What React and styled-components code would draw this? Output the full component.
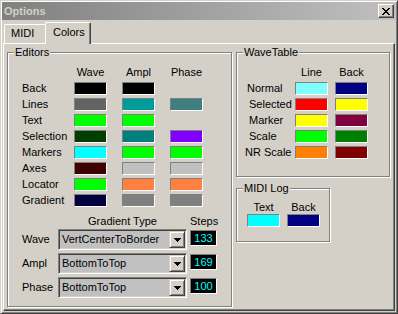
import React from "react";
import styled, { createGlobalStyle } from "styled-components";

const GlobalStyle = createGlobalStyle`
  html, body { margin: 0; padding: 0; background: #d4d0c8; }
  body { font-family: "Liberation Sans", Arial, sans-serif; font-size: 11px; color: #000; }
  * { box-sizing: border-box; }
`;

const Window = styled.div`
  width: 398px;
  height: 314px;
  background: #d4d0c8;
  border: 1px solid;
  border-color: #d4d0c8 #404040 #404040 #d4d0c8;
  box-shadow: inset 1px 1px 0 #fff, inset -1px -1px 0 #808080;
  padding: 1px;
  display: flex;
  flex-direction: column;
`;

const TitleBar = styled.div`
  height: 18px;
  background: linear-gradient(to right, #808080, #c0c0c0);
  display: flex;
  align-items: center;
  justify-content: space-between;
  padding: 0 2px 0 2px;
`;

const TitleText = styled.span`
  color: #d4d0c8;
  font-weight: bold;
  font-size: 11px;
  line-height: 13px;
`;

const CloseButton = styled.div`
  width: 16px;
  height: 14px;
  background: #d4d0c8;
  border: 1px solid;
  border-color: #fff #404040 #404040 #fff;
  box-shadow: inset -1px -1px 0 #808080;
  display: flex;
  align-items: center;
  justify-content: center;
  padding-right: 1px;
`;

const TabStrip = styled.div`
  height: 21px;
  margin-top: 2px;
  display: flex;
  align-items: flex-end;
`;

const Tab = styled.div`
  position: relative;
  z-index: ${(p) => (p.$active ? 1 : 0)};
  width: ${(p) => p.$w}px;
  height: ${(p) => (p.$active ? 22 : 19)}px;
  margin-left: ${(p) => p.$ml}px;
  margin-bottom: ${(p) => (p.$active ? -1 : 0)}px;
  background: #d4d0c8;
  border-top: 1px solid #fff;
  border-left: 1px solid #fff;
  border-right: 1px solid #404040;
  border-top-left-radius: 2px;
  border-top-right-radius: 2px;
  box-shadow: inset -1px 0 0 #808080;
  display: flex;
  align-items: center;
  padding-left: ${(p) => p.$pl}px;
  padding-bottom: ${(p) => (p.$active ? 3 : 2)}px;
  line-height: 13px;
`;

const Panel = styled.div`
  margin: 0 1px;
  height: 268px;
  border-top: 1px solid #fff;
  border-left: 1px solid #fff;
  border-right: 1px solid #404040;
  border-bottom: 1px solid #404040;
  box-shadow: inset -1px -1px 0 #808080;
  padding: 8px 0 0 3px;
  display: flex;
  gap: 4px;
  align-items: flex-start;
`;

const Column = styled.div`
  display: flex;
  flex-direction: column;
  gap: 11px;
`;

const GroupBox = styled.div`
  position: relative;
  width: ${(p) => p.$w}px;
  height: ${(p) => p.$h}px;
  border: 1px solid #808080;
  box-shadow: inset 1px 1px 0 #fff, 1px 1px 0 #fff;
  padding: ${(p) => p.$pad};
  display: flex;
  flex-direction: column;
`;

const Legend = styled.span`
  position: absolute;
  top: -7px;
  left: 6px;
  padding: 0 1px;
  background: #d4d0c8;
  line-height: 13px;
  white-space: nowrap;
`;

const ColorGrid = styled.div`
  display: grid;
  grid-template-columns: ${(p) => p.$cols};
  grid-auto-rows: 13px;
  row-gap: ${(p) => p.$rowGap}px;
  align-items: center;
`;

const RowLabel = styled.span`
  white-space: nowrap;
  line-height: 13px;
  margin-left: ${(p) => p.$dx || 0}px;
`;

const ColHead = styled.span`
  width: 33px;
  text-align: center;
  white-space: nowrap;
  line-height: 13px;
`;

const Swatch = styled.div`
  width: 33px;
  height: 13px;
  border: 1px solid;
  border-color: #808080 #fff #fff #808080;
  background: ${(p) => p.$c};
`;

const GradHeader = styled.div`
  display: grid;
  grid-template-columns: 36px 132px 27px;
  height: 13px;
  margin-top: 8px;
  line-height: 13px;
`;

const GradRows = styled.div`
  display: grid;
  grid-template-columns: 36px 132px 27px;
  grid-auto-rows: 21px;
  row-gap: 3px;
  margin-top: 1px;
  align-items: center;
`;

const CenterText = styled.span`
  text-align: center;
  white-space: nowrap;
  width: ${(p) => p.$w}px;
`;

const Combo = styled.div`
  width: 129px;
  height: 21px;
  border: 1px solid;
  border-color: #808080 #fff #fff #808080;
  box-shadow: inset 1px 1px 0 #404040, inset -1px -1px 0 #d4d0c8;
  background: #c0c0c0;
  padding: 1px;
  display: flex;
`;

const ComboText = styled.span`
  flex: 1;
  padding-left: 2px;
  line-height: 17px;
  white-space: nowrap;
  overflow: hidden;
`;

const DropButton = styled.div`
  width: 16px;
  height: 17px;
  background: #d4d0c8;
  border: 1px solid;
  border-color: #d4d0c8 #404040 #404040 #d4d0c8;
  box-shadow: inset 1px 1px 0 #fff, inset -1px -1px 0 #808080;
  display: flex;
  align-items: center;
  justify-content: center;
`;

const StepsBox = styled.div`
  align-self: start;
  margin-top: 1px;
  width: 27px;
  height: 16px;
  border: 1px solid;
  border-color: #808080 #fff #fff #808080;
  background: #000;
  color: #00ffff;
  text-align: center;
  line-height: 14px;
`;

const CloseIcon = () => {
  const rows = [
    [0, 1, 6, 7],
    [1, 2, 5, 6],
    [2, 3, 4, 5],
    [3, 4],
    [2, 3, 4, 5],
    [1, 2, 5, 6],
    [0, 1, 6, 7],
  ];
  return (
    <svg width="8" height="7" viewBox="0 0 8 7" shapeRendering="crispEdges">
      {rows.map((xs, y) =>
        xs.map((x) => <rect key={`${x}-${y}`} x={x} y={y} width="1" height="1" fill="#000" />)
      )}
    </svg>
  );
};

const DownArrow = () => (
  <svg width="7" height="4" viewBox="0 0 7 4" shapeRendering="crispEdges">
    <path d="M0 0h7v1H0zM1 1h5v1H1zM2 2h3v1H2zM3 3h1v1H3z" fill="#000" />
  </svg>
);

const editorRows = [
  ["Back", "#000000", "#000000", null],
  ["Lines", "#636363", "#009c9c", "#3f7f7f"],
  ["Text", "#00ff00", "#00ff00", null],
  ["Selection", "#003f00", "#007f7f", "#8000ff"],
  ["Markers", "#00ffff", "#00ff00", "#00ff00"],
  ["Axes", "#3f0000", "#c0c0c0", "#c0c0c0"],
  ["Locator", "#00ff00", "#ff8040", "#ff8040"],
  ["Gradient", "#000040", "#808080", "#808080"],
];

const waveRows = [
  ["Normal", 2, "#80ffff", "#000080"],
  ["Selected", 4, "#ff0000", "#ffff00"],
  ["Marker", 4, "#ffff00", "#800040"],
  ["Scale", 4, "#00ff00", "#008000"],
  ["NR Scale", 0, "#ff8000", "#800000"],
];

const gradRows = [
  ["Wave", "VertCenterToBorder", "133"],
  ["Ampl", "BottomToTop", "169"],
  ["Phase", "BottomToTop", "100"],
];

export default function App() {
  return (
    <>
      <GlobalStyle />
      <Window>
        <TitleBar>
          <TitleText>Options</TitleText>
          <CloseButton>
            <CloseIcon />
          </CloseButton>
        </TitleBar>
        <TabStrip>
          <Tab $w={43} $ml={2} $pl={6}>MIDI</Tab>
          <Tab $w={46} $ml={-2} $pl={7} $active>Colors</Tab>
        </TabStrip>
        <Panel>
          <GroupBox $w={225} $h={255} $pad="13px 0 0 14px">
            <Legend>Editors</Legend>
            <ColorGrid $cols="52px 48px 48px 48px" $rowGap={3}>
              <span />
              <ColHead>Wave</ColHead>
              <ColHead>Ampl</ColHead>
              <ColHead>Phase</ColHead>
              {editorRows.map(([label, a, b, c]) => (
                <React.Fragment key={label}>
                  <RowLabel>{label}</RowLabel>
                  <Swatch $c={a} />
                  <Swatch $c={b} />
                  {c ? <Swatch $c={c} /> : <span />}
                </React.Fragment>
              ))}
            </ColorGrid>
            <GradHeader>
              <span />
              <CenterText $w={129}>Gradient Type</CenterText>
              <CenterText $w={27}>Steps</CenterText>
            </GradHeader>
            <GradRows>
              {gradRows.map(([label, type, steps]) => (
                <React.Fragment key={label}>
                  <RowLabel>{label}</RowLabel>
                  <Combo>
                    <ComboText>{type}</ComboText>
                    <DropButton>
                      <DownArrow />
                    </DropButton>
                  </Combo>
                  <StepsBox>{steps}</StepsBox>
                </React.Fragment>
              ))}
            </GradRows>
          </GroupBox>
          <Column>
            <GroupBox $w={154} $h={125} $pad="13px 0 0 8px">
              <Legend>WaveTable</Legend>
              <ColorGrid $cols="50px 40px 33px" $rowGap={3}>
                <span />
                <ColHead>Line</ColHead>
                <ColHead>Back</ColHead>
                {waveRows.map(([label, dx, a, b]) => (
                  <React.Fragment key={label}>
                    <RowLabel $dx={dx}>{label}</RowLabel>
                    <Swatch $c={a} />
                    <Swatch $c={b} />
                  </React.Fragment>
                ))}
              </ColorGrid>
            </GroupBox>
            <GroupBox $w={94} $h={54} $pad="12px 0 0 10px">
              <Legend>MIDI Log</Legend>
              <ColorGrid $cols="40px 33px" $rowGap={0}>
                <ColHead>Text</ColHead>
                <ColHead>Back</ColHead>
                <Swatch $c="#00ffff" />
                <Swatch $c="#000080" />
              </ColorGrid>
            </GroupBox>
          </Column>
        </Panel>
      </Window>
    </>
  );
}
